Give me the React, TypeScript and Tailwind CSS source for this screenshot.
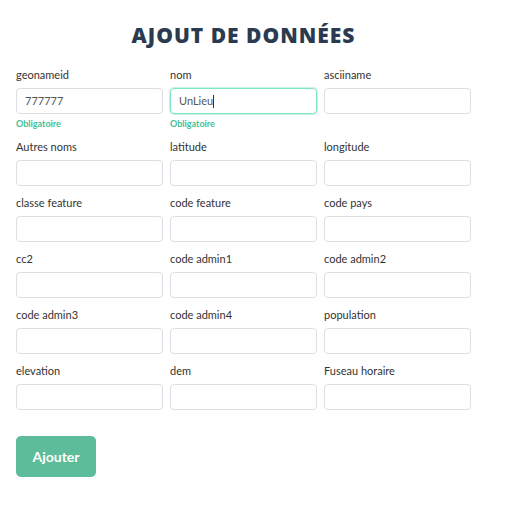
const fields: { label: string; value?: string; required?: boolean; focused?: boolean }[] = [
  { label: "geonameid", value: "777777", required: true },
  { label: "nom", value: "UnLieu", required: true, focused: true },
  { label: "asciiname" },
  { label: "Autres noms" },
  { label: "latitude" },
  { label: "longitude" },
  { label: "classe feature" },
  { label: "code feature" },
  { label: "code pays" },
  { label: "cc2" },
  { label: "code admin1" },
  { label: "code admin2" },
  { label: "code admin3" },
  { label: "code admin4" },
  { label: "population" },
  { label: "elevation" },
  { label: "dem" },
  { label: "Fuseau horaire" },
];

function Field({ label, value, required, focused }: { label: string; value?: string; required?: boolean; focused?: boolean }) {
  return (
    <div className="flex flex-col">
      <label className="h-[14px] mb-[6px] text-[11px] leading-[14px] text-[#333]">{label}</label>
      <div
        className={
          focused
            ? "h-[26px] rounded-[4px] border border-[#7ee3c6] shadow-[0_0_0_1px_#c9f3e6] flex items-center px-[8px]"
            : "h-[26px] rounded-[4px] border border-[#dcdfe4] flex items-center px-[8px]"
        }
      >
        {value && <span className="text-[11px] text-[#555]">{value}</span>}
        {focused && <span className="w-px h-[13px] bg-[#333]" />}
      </div>
      {required && (
        <span className="mt-[4px] text-[9px] leading-[12px] font-bold text-[#45c096]">Obligatoire</span>
      )}
    </div>
  );
}

export default function App() {
  return (
    <div className="w-[515px] h-[508px] bg-white font-['Lato',sans-serif]">
      <div className="w-[455px] ml-[16px] pt-[22px]">
        <h1 className="text-center text-[21px] leading-[26px] font-extrabold tracking-[1px] text-[#2b3a4f] font-['Open_Sans',sans-serif]">
          AJOUT DE DONNÉES
        </h1>
        <div className="mt-[20px] grid grid-cols-3 gap-x-[7px] gap-y-[10px]">
          {fields.map((f) => (
            <Field key={f.label} {...f} />
          ))}
        </div>
        <button className="mt-[26px] w-[80px] h-[41px] rounded-[5px] bg-[#5dbc99] text-white text-[14px] font-bold">
          Ajouter
        </button>
      </div>
    </div>
  );
}
